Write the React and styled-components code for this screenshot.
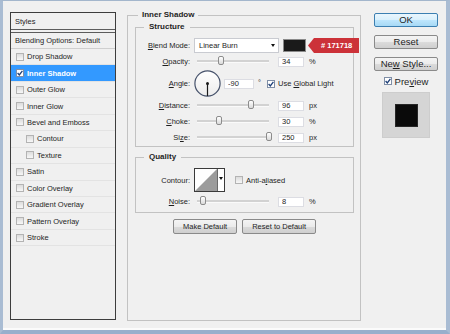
import React from "react";
import styled, { createGlobalStyle } from "styled-components";

const GlobalStyle = createGlobalStyle`
  html, body {
    margin: 0;
    padding: 0;
    background: #f0f0f0;
  }
  body {
    font-family: "Liberation Sans", Arial, sans-serif;
    font-size: 7.5px;
    color: #1e1e1e;
  }
`;

const styleItems = [
  { label: "Drop Shadow" },
  { label: "Inner Shadow", checked: true, active: true },
  { label: "Outer Glow" },
  { label: "Inner Glow" },
  { label: "Bevel and Emboss" },
  { label: "Contour", indent: true },
  { label: "Texture", indent: true },
  { label: "Satin" },
  { label: "Color Overlay" },
  { label: "Gradient Overlay" },
  { label: "Pattern Overlay" },
  { label: "Stroke" },
];

const CheckMark = () => (
  <svg width="6" height="6" viewBox="0 0 6 6">
    <path d="M0.6 3 L2.3 4.9 L5.4 0.8" fill="none" stroke="#1d3f78" strokeWidth="1.3" />
  </svg>
);

const Dial = () => (
  <svg width="27" height="27" viewBox="0 0 27 27">
    <defs>
      <linearGradient id="dialFill" x1="0" y1="0" x2="0" y2="1">
        <stop offset="0" stopColor="#ffffff" />
        <stop offset="1" stopColor="#ececec" />
      </linearGradient>
    </defs>
    <circle cx="13.5" cy="13.5" r="12.6" fill="url(#dialFill)" stroke="#46526b" strokeWidth="1.2" />
    <line x1="13.5" y1="13.5" x2="13.5" y2="26" stroke="#1a1a1a" strokeWidth="1.2" />
    <circle cx="13.5" cy="13.5" r="1.5" fill="#1a1a1a" />
  </svg>
);

const ContourCurve = () => (
  <svg width="22" height="22" viewBox="0 0 22 22">
    <rect width="22" height="22" fill="#ffffff" />
    <polygon points="0,22 22,0 22,22" fill="#9c9c9c" />
  </svg>
);

const Checkbox = ({ checked }) => (
  <Box $checked={checked}>{checked ? <CheckMark /> : null}</Box>
);

const SliderRow = ({ label, pos, value, unit }) => (
  <Row>
    <Label>{label}</Label>
    <Slider>
      <Track>
        <Thumb style={{ left: `${pos}%` }} />
      </Track>
    </Slider>
    <Field readOnly value={value} />
    <Unit>{unit}</Unit>
  </Row>
);

const App = () => {
  return (
    <>
      <GlobalStyle />
      <Window>
        <StylesPanel>
          <PanelHeader>Styles</PanelHeader>
          <BlendingRow>Blending Options: Default</BlendingRow>
          {styleItems.map((item) => (
            <StyleRow key={item.label} $indent={item.indent} $active={item.active}>
              <Checkbox checked={item.checked} />
              <span>{item.label}</span>
            </StyleRow>
          ))}
        </StylesPanel>

        <MainGroup>
          <Legend>Inner Shadow</Legend>
          <SubGroup>
            <SubLegend>Structure</SubLegend>
            <Rows>
              <Row>
                <Label>
                  <U>B</U>lend Mode:
                </Label>
                <Select>
                  <span>Linear Burn</span>
                  <Arrow />
                </Select>
                <Swatch />
                <ColorTag># 171718</ColorTag>
              </Row>
              <SliderRow
                label={<><U>O</U>pacity:</>}
                pos={34}
                value="34"
                unit="%"
              />
              <Row $tall>
                <Label>
                  <U>A</U>ngle:
                </Label>
                <Dial />
                <Field $wide readOnly value="-90" />
                <Degree>°</Degree>
                <CheckLabel>
                  <Checkbox checked />
                  <span>
                    Use <U>G</U>lobal Light
                  </span>
                </CheckLabel>
              </Row>
              <SliderRow
                label={<><U>D</U>istance:</>}
                pos={75}
                value="96"
                unit="px"
              />
              <SliderRow
                label={<><U>C</U>hoke:</>}
                pos={30}
                value="30"
                unit="%"
              />
              <SliderRow
                label={<>Si<U>z</U>e:</>}
                pos={100}
                value="250"
                unit="px"
              />
            </Rows>
          </SubGroup>

          <QualityGroup>
            <SubLegend>Quality</SubLegend>
            <Rows>
              <Row $contour>
                <Label>Contour:</Label>
                <ContourPicker>
                  <ContourCurve />
                  <PickerArrow>
                    <Arrow />
                  </PickerArrow>
                </ContourPicker>
                <CheckLabel $spaced>
                  <Checkbox />
                  <span>
                    Anti-a<U>l</U>iased
                  </span>
                </CheckLabel>
              </Row>
              <SliderRow
                label={<><U>N</U>oise:</>}
                pos={8}
                value="8"
                unit="%"
              />
            </Rows>
          </QualityGroup>

          <ButtonBar>
            <Button>Make Default</Button>
            <Button>Reset to Default</Button>
          </ButtonBar>
        </MainGroup>

        <SideColumn>
          <SideButton $primary>OK</SideButton>
          <SideButton>Reset</SideButton>
          <SideButton>
            Ne<U>w</U> Style...
          </SideButton>
          <PreviewToggle>
            <Checkbox checked />
            <span>
              Pre<U>v</U>iew
            </span>
          </PreviewToggle>
          <PreviewBox>
            <PreviewSquare />
          </PreviewBox>
        </SideColumn>
      </Window>
    </>
  );
};

export default App;

const Window = styled.div`
  width: 450px;
  height: 334px;
  box-sizing: border-box;
  display: flex;
  align-items: stretch;
  padding: 9px 0 9px 7px;
  background: #f0f0f0;
  border-top: 1px solid #a3b6cc;
  border-left: 3px solid #a9bcd3;
  border-right: 4px solid #a9bcd3;
  border-bottom: 4px solid #98afcc;
  box-shadow: inset 0 -2px 0 #fbfbfb;
`;

const U = styled.span`
  text-decoration: underline;
`;

const StylesPanel = styled.div`
  width: 106px;
  flex-shrink: 0;
  box-sizing: border-box;
  margin: 2px 0 1px;
  border: 1px solid #3d3d3d;
  background: #f0f0f0;
  display: flex;
  flex-direction: column;
`;

const PanelHeader = styled.div`
  height: 16px;
  display: flex;
  align-items: center;
  padding-left: 4px;
  border-bottom: 4px double #5c5c5c;
`;

const BlendingRow = styled.div`
  height: 15px;
  display: flex;
  align-items: center;
  padding-left: 4px;
  border-bottom: 1px solid #cfcfcf;
`;

const StyleRow = styled.div`
  height: 16.45px;
  box-sizing: border-box;
  display: flex;
  align-items: center;
  gap: 3px;
  padding-left: ${(p) => (p.$indent ? 15 : 5)}px;
  border-bottom: 1px solid #e3e3e3;
  background: ${(p) => (p.$active ? "#3399ff" : "transparent")};
  color: ${(p) => (p.$active ? "#ffffff" : "#1e1e1e")};
  font-weight: ${(p) => (p.$active ? "bold" : "normal")};
`;

const Box = styled.span`
  width: 8px;
  height: 8px;
  box-sizing: border-box;
  flex-shrink: 0;
  display: inline-flex;
  align-items: center;
  justify-content: center;
  border: 1px solid ${(p) => (p.$checked ? "#7f8ea6" : "#b3b3b3")};
  background: ${(p) =>
    p.$checked ? "#ffffff" : "linear-gradient(#dcdcdc, #f7f7f7)"};
`;

const MainGroup = styled.fieldset`
  width: 234px;
  flex-shrink: 0;
  min-width: 0;
  box-sizing: border-box;
  margin: 0 0 0 11px;
  padding: 2px 6px 0 7px;
  border: 1px solid #c2c2c2;
  display: flex;
  flex-direction: column;
`;

const Legend = styled.legend`
  margin-left: 3px;
  padding: 0 4px;
  font-weight: bold;
  font-size: 8px;
  line-height: 10px;
`;

const SubGroup = styled.fieldset`
  margin: 0;
  padding: 6px 0 1px 1px;
  min-width: 0;
  border: 1px solid #c2c2c2;
`;

const QualityGroup = styled(SubGroup)`
  margin-top: 5px;
  padding-bottom: 3px;
`;

const SubLegend = styled.legend`
  margin-left: 7px;
  padding: 0 5px;
  font-weight: bold;
  font-size: 8px;
  line-height: 10px;
`;

const Rows = styled.div`
  display: flex;
  flex-direction: column;
  gap: 1px;
`;

const Row = styled.div`
  height: ${(p) => (p.$tall ? 27 : p.$contour ? 24 : 15)}px;
  display: flex;
  align-items: center;
  margin-bottom: ${(p) => (p.$contour ? 1 : 0)}px;
`;

const Label = styled.span`
  width: 53px;
  flex-shrink: 0;
  text-align: right;
  margin-right: 4px;
`;

const Select = styled.div`
  width: 85px;
  height: 15px;
  box-sizing: border-box;
  flex-shrink: 0;
  display: flex;
  align-items: center;
  justify-content: space-between;
  padding: 0 3px 0 4px;
  background: #ffffff;
  border: 1px solid #c9cbd1;
`;

const Arrow = styled.span`
  width: 0;
  height: 0;
  border-left: 2.5px solid transparent;
  border-right: 2.5px solid transparent;
  border-top: 3px solid #111111;
`;

const Swatch = styled.div`
  width: 23px;
  height: 13px;
  box-sizing: border-box;
  flex-shrink: 0;
  margin-left: 4px;
  background: #1a1a1a;
  border: 1px solid #8a8a8a;
`;

const ColorTag = styled.div`
  width: 51px;
  height: 15px;
  flex-shrink: 0;
  margin-left: 2px;
  box-sizing: border-box;
  display: flex;
  align-items: center;
  padding-left: 13px;
  position: relative;
  background: #cc3239;
  color: #ffffff;
  font-weight: bold;
  clip-path: polygon(6px 0, 100% 0, 100% 100%, 6px 100%, 0 50%);
`;

const Slider = styled.div`
  width: 78px;
  flex-shrink: 0;
  padding: 0 3px;
  box-sizing: border-box;
  margin-right: 6px;
`;

const Track = styled.div`
  position: relative;
  height: 2px;
  background: #d2d2d2;
  border-bottom: 1px solid #fafafa;
`;

const Thumb = styled.span`
  position: absolute;
  top: -4px;
  width: 6px;
  height: 9px;
  margin-left: -3px;
  box-sizing: border-box;
  border: 1px solid #8c8c8c;
  border-radius: 2px;
  background: linear-gradient(#ffffff, #dadada);
`;

const Field = styled.input`
  width: ${(p) => (p.$wide ? 30 : 26)}px;
  height: 10px;
  box-sizing: border-box;
  flex-shrink: 0;
  margin: 0 0 0 ${(p) => (p.$wide ? 3 : 0)}px;
  padding: 0 0 0 3px;
  border: 1px solid #dcdde3;
  background: #ffffff;
  font: inherit;
  color: #1e1e1e;
  outline: none;
`;

const Unit = styled.span`
  margin-left: 5px;
`;

const Degree = styled.span`
  margin-left: 4px;
  align-self: flex-start;
  margin-top: 8px;
`;

const CheckLabel = styled.span`
  display: flex;
  align-items: center;
  gap: 3px;
  margin-left: ${(p) => (p.$spaced ? 10 : 6)}px;
`;

const ContourPicker = styled.div`
  width: 31px;
  height: 24px;
  box-sizing: border-box;
  flex-shrink: 0;
  display: flex;
  border: 1px solid #3a3a3a;
  background: #ffffff;
`;

const PickerArrow = styled.div`
  flex: 1;
  display: flex;
  align-items: center;
  justify-content: center;
  border-left: 1px solid #6a6a6a;
  padding-bottom: 4px;
`;

const ButtonBar = styled.div`
  display: flex;
  justify-content: center;
  gap: 5px;
  margin-top: 6px;
`;

const Button = styled.button`
  height: 15px;
  margin: 0;
  padding: 0 9px;
  box-sizing: border-box;
  font: inherit;
  color: #1e1e1e;
  border: 1px solid #8a8a8a;
  border-radius: 2px;
  background: linear-gradient(#f4f4f4 0%, #ebebeb 50%, #dbdbdb 51%, #cfcfcf 100%);
`;

const SideColumn = styled.div`
  width: 64px;
  flex-shrink: 0;
  margin: 3px 0 0 13px;
  display: flex;
  flex-direction: column;
  align-items: center;
  font-size: 9.5px;
`;

const SideButton = styled.button`
  width: 64px;
  height: 14px;
  margin: 0 0 8px;
  padding: 0;
  box-sizing: border-box;
  font: inherit;
  line-height: 12px;
  color: #1e1e1e;
  border-radius: 2px;
  border: 1px solid ${(p) => (p.$primary ? "#3c7fb1" : "#8a8a8a")};
  background: ${(p) =>
    p.$primary
      ? "linear-gradient(#eaf6fd 0%, #d9f0fc 50%, #bee6fd 51%, #a7d9f5 100%)"
      : "linear-gradient(#f4f4f4 0%, #ebebeb 50%, #dbdbdb 51%, #cfcfcf 100%)"};
`;

const PreviewToggle = styled.div`
  display: flex;
  align-items: center;
  gap: 3px;
  margin-top: -3px;
  height: 10px;
`;

const PreviewBox = styled.div`
  width: 48px;
  height: 46px;
  box-sizing: border-box;
  margin-top: 6px;
  display: flex;
  align-items: center;
  justify-content: center;
  background: #d5d5d5;
  border: 1px solid #cdcdcd;
`;

const PreviewSquare = styled.div`
  width: 23px;
  height: 23px;
  box-sizing: border-box;
  background: #0a0a0a;
  border: 1px solid #262626;
`;
